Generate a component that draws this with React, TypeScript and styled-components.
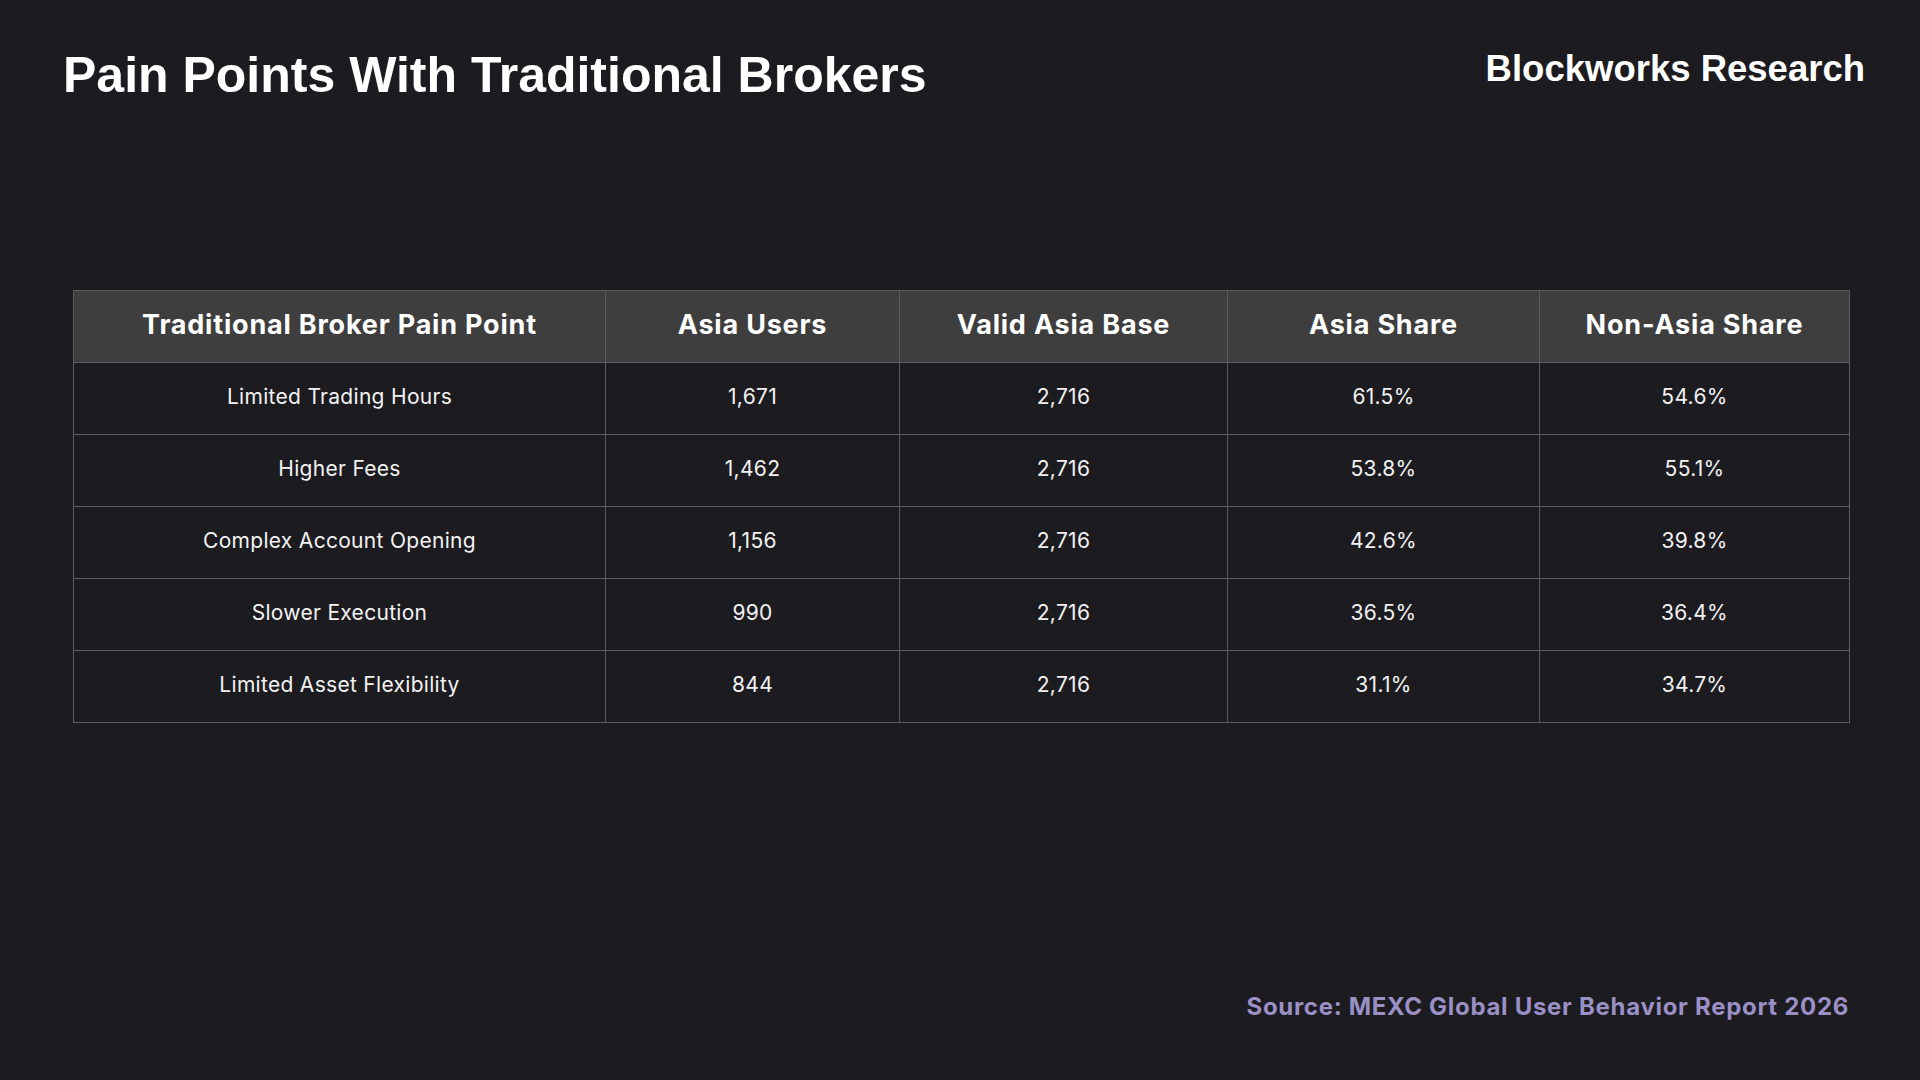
import React from "react";
import styled, { createGlobalStyle } from "styled-components";

const Global = createGlobalStyle`
  html, body { margin: 0; padding: 0; background: #1c1b20; }
  #root { min-height: 1080px; }
`;

const Page = styled.div`
  width: 1920px;
  height: 1080px;
  box-sizing: border-box;
  background: #1c1b20;
  display: flex;
  flex-direction: column;
  padding: 50px 0 61px;
`;

const Header = styled.header`
  display: flex;
  justify-content: space-between;
  align-items: flex-start;
  padding: 0 55px 0 63px;
`;

const Title = styled.h1`
  margin: 0;
  font-family: "Liberation Sans", Arial, sans-serif;
  font-weight: 700;
  font-size: 50px;
  line-height: 1;
  color: #ffffff;
`;

const Brand = styled.div`
  margin-top: 1px;
  font-family: "Liberation Sans", Arial, sans-serif;
  font-weight: 700;
  font-size: 36.5px;
  line-height: 1;
  color: #ffffff;
`;

const TableWrap = styled.div`
  margin: 190px 71px 0 73px;
`;

const Table = styled.table`
  width: 100%;
  border-collapse: collapse;
  table-layout: fixed;
  border: 1px solid #5c5c5c;
`;

const HeadCell = styled.th`
  height: 66px;
  padding: 0 6px 5px;
  background: #3e3e3e;
  border: 1px solid #5c5c5c;
  font-family: Inter, "Noto Sans", sans-serif;
  font-weight: 700;
  font-size: 27px;
  letter-spacing: 0.8px;
  color: #ffffff;
  text-align: center;
  vertical-align: middle;
  white-space: nowrap;
`;

const Cell = styled.td`
  height: 66px;
  padding: 0 6px 5px;
  border: 1px solid #5c5c5c;
  font-family: Inter, "Noto Sans", sans-serif;
  font-weight: 400;
  font-size: 21px;
  letter-spacing: 0.3px;
  color: #f2f2f2;
  text-align: center;
  vertical-align: middle;
`;

const Source = styled.div`
  margin-top: auto;
  padding-right: 71px;
  text-align: right;
  font-family: Inter, "Noto Sans", sans-serif;
  font-weight: 700;
  font-size: 24px;
  letter-spacing: 0.7px;
  line-height: 1;
  color: #9a90c5;
`;

const columns = [
  { label: "Traditional Broker Pain Point", width: 532 },
  { label: "Asia Users", width: 294 },
  { label: "Valid Asia Base", width: 328 },
  { label: "Asia Share", width: 312 },
  { label: "Non-Asia Share", width: 310 },
];

const rows = [
  ["Limited Trading Hours", "1,671", "2,716", "61.5%", "54.6%"],
  ["Higher Fees", "1,462", "2,716", "53.8%", "55.1%"],
  ["Complex Account Opening", "1,156", "2,716", "42.6%", "39.8%"],
  ["Slower Execution", "990", "2,716", "36.5%", "36.4%"],
  ["Limited Asset Flexibility", "844", "2,716", "31.1%", "34.7%"],
];

export default function App() {
  return (
    <>
      <Global />
      <Page>
        <Header>
          <Title>Pain Points With Traditional Brokers</Title>
          <Brand>Blockworks Research</Brand>
        </Header>
        <TableWrap>
          <Table>
            <colgroup>
              {columns.map((c) => (
                <col key={c.label} style={{ width: c.width }} />
              ))}
            </colgroup>
            <thead>
              <tr>
                {columns.map((c) => (
                  <HeadCell key={c.label}>{c.label}</HeadCell>
                ))}
              </tr>
            </thead>
            <tbody>
              {rows.map((r) => (
                <tr key={r[0]}>
                  {r.map((v, i) => (
                    <Cell key={i}>{v}</Cell>
                  ))}
                </tr>
              ))}
            </tbody>
          </Table>
        </TableWrap>
        <Source>Source: MEXC Global User Behavior Report 2026</Source>
      </Page>
    </>
  );
}
